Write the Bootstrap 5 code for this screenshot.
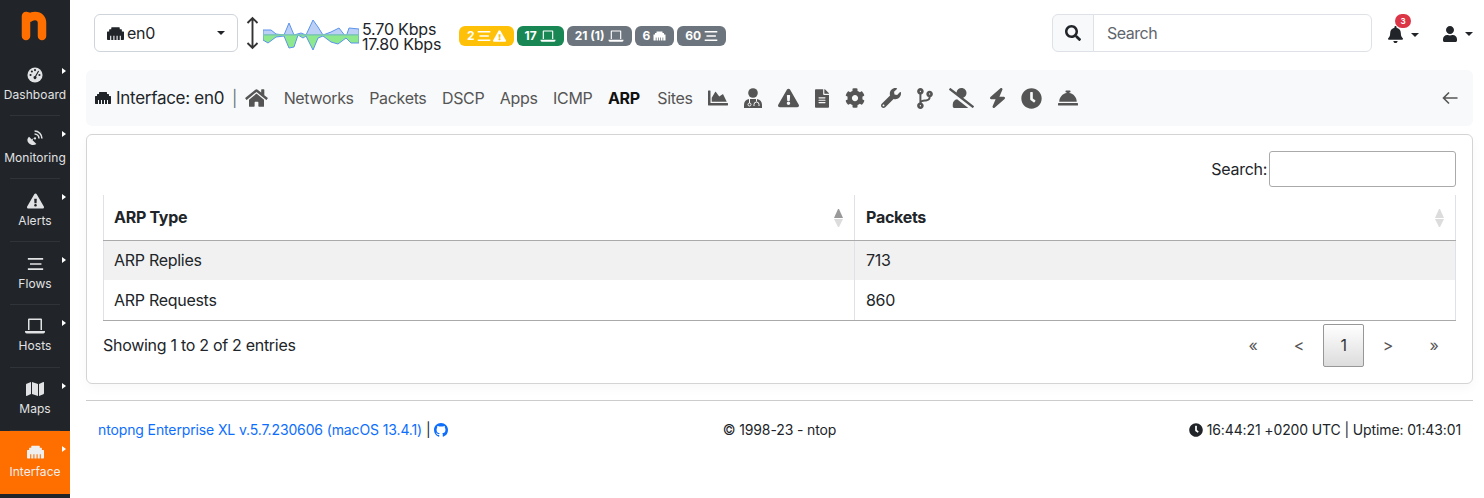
<!DOCTYPE html>
<html lang="en"><head><meta charset="utf-8"><title>ntopng</title>
<link rel="stylesheet" href="https://cdn.jsdelivr.net/npm/bootstrap@5.3.0/dist/css/bootstrap.min.css">
<style>
body{font-family:"Inter","Liberation Sans",sans-serif;color:#212529;font-size:16px;height:498px;overflow:hidden;letter-spacing:-.018em}
.ico{fill:currentColor;display:block}
.side{width:70px;height:498px;background:#212529;flex:none}
.logo-box{height:53px;padding:11px 0 0 21px}
.side-item{display:block;position:relative;height:63px;padding-top:13px;text-align:center;color:#e1e2e3;font-size:12px;line-height:18px;letter-spacing:.005em;text-decoration:none}
.side-item.nudge{padding-top:12px}
.side-item::after{content:"";position:absolute;left:10px;right:10px;bottom:0;border-bottom:1px solid #2f343a}
.side-item.on{background:#ff6f00;color:#eee}
.side-item.on::after{display:none}
.side-item .ico{margin:0 auto 2px;height:18px}
.side-caret{position:absolute;left:62px;top:15px;border-left:4.5px solid #fff;border-top:3.5px solid transparent;border-bottom:3.5px solid transparent}
.main{padding:0 11px 0 16px;min-width:0}
.top{height:66px;margin-bottom:4px;padding:14px 0 0 8px}
.if-select{width:144px;height:38px;border:1px solid #ced4da;border-radius:6px;padding:0 12px;background:#fff;font-size:16px}
.if-select .ico{width:17px;margin-right:3px}
.rate{font-size:16px;line-height:15px;margin-left:3px;width:97px;letter-spacing:-.012em}
.pills{gap:3px}
.pill{height:20px;padding:0 8px;border-radius:6px;font-size:12px;font-weight:700;line-height:20px;letter-spacing:0;color:#fff}
.pill .ico{margin-left:3px;height:12px}
.pill-first .ico{margin-left:2px}
.y-pill{background:#ffc107}.g-pill{background:#198754}.s-pill{background:#6c757d}
.find{width:320px;height:38px;margin-left:auto}
.find .input-group-text{background:#f8f9fa;padding:0 12px;width:42px}
.find .form-control{padding-left:13px;font-size:16px;letter-spacing:-.03em}
.find .form-control::placeholder{color:#5f666c}
.tool{position:relative;margin-left:16px;color:#212529}
.tool-user{margin-left:24px}
.bdg{position:absolute;left:7px;top:-8px;width:16px;height:14px;border-radius:7px;background:#dc3545;color:#fff;font-size:8px;font-weight:700;line-height:14px;text-align:center;letter-spacing:0}
.tiny-caret{border-top:4px solid #212529;border-left:4px solid transparent;border-right:4px solid transparent;margin-left:8px}
.if-select .tiny-caret{margin-left:auto}
.subnav{height:56px;background:#f8f9fa;border-radius:6px;padding:0 0 0 8px;color:#212529}
.subnav .ttl{font-size:17px;padding-top:1px}
.subnav .nl{color:#555;margin-left:15.5px;text-decoration:none;letter-spacing:-.021em}
.subnav .nl.act{color:#111;font-weight:700}
.subnav .nl.nl-sites{margin-left:17.5px}
.subnav .icn{color:#555;display:block;flex:none}
.subnav .pipe{margin:0 8px 0 8px}
.nav-icons{gap:16px;margin-left:15px;fill:#555}
.back-arrow{margin-right:15px}
.cardish{margin-top:8px;height:250px;border:1px solid #d4d4d4;border-radius:6px;padding:16px;box-shadow:0 4px 12px rgba(0,0,0,.03)}
.srch-row{height:44px}
.srch-row label{padding-top:6px}
.srch-row input{width:187px;height:36px;margin-left:2px;border-color:#aaa;border-radius:3px}
.dt{width:1353px;border-collapse:collapse;table-layout:fixed}
.dt th{height:45px;padding:0 10px;font-weight:700;border-bottom:1px solid #aaa;position:relative}
.dt td{height:40px;padding:0 10px}
.dt th:first-child,.dt td:first-child{border-left:1px solid #dee2e6;width:751px;border-right:1px solid #dee2e6}
.dt th:last-child,.dt td:last-child{border-right:1px solid #dee2e6;padding-left:11px}
.dt tbody tr:first-child{background:#f1f1f1}
.dt tbody tr:last-child td{border-bottom:1px solid #aaa}
.sorter{position:absolute;right:11px;top:14px;width:9px}
.sorter i{display:block;border-left:4.5px solid transparent;border-right:4.5px solid transparent}
.sorter i:first-child{border-bottom:9px solid #dcdcdc;margin-bottom:1px}
.sorter i:last-child{border-top:8px solid #dcdcdc}
.sorter.up i:first-child{border-bottom-color:#999}
.foot-row{height:47px;padding-top:2px}
.pgr{display:flex;align-items:center;margin:1px -1px 0 0;padding:0;list-style:none;color:#555}
.pgr span{display:block;width:46px;text-align:center;line-height:43px;height:43px;font-size:16px}
.pgr .cur{width:41px;margin:0 1px 0 1px;color:#333;border:1px solid #979797;border-radius:2px;background:linear-gradient(#fff,#dcdcdc);line-height:41px}
.sep{border-top:1px solid #ccc;margin-top:16px}
.foot{font-size:14px;padding:18px 12px 0;letter-spacing:-.009em}
.foot a{color:#0d6efd;text-decoration:none}
.foot svg{vertical-align:-2px}
.gh{fill:#0d6efd}.clk{fill:#212529}
</style></head>
<body>
<svg width="0" height="0" class="position-absolute"><defs>
<symbol id="eth" viewBox="0 0 512 512"><path d="M496 192h-48v-48c0-8.800-7.200-16-16-16h-48V80c0-8.800-7.200-16-16-16H144c-8.800 0-16 7.200-16 16v48H80c-8.800 0-16 7.200-16 16v48H16c-8.800 0-16 7.200-16 16v224c0 8.800 7.200 16 16 16h80V320h32v128h64V320h32v128h64V320h32v128h64V320h32v128h80c8.800 0 16-7.200 16-16V208c0-8.800-7.200-16-16-16z"/></symbol>
<symbol id="warn" viewBox="0 0 576 512"><path d="M569.517 440.013C587.975 472.007 564.806 512 527.94 512H48.054c-36.937 0-59.999-40.055-41.577-71.987L246.423 24.028c18.467-32.009 64.72-31.951 83.154 0l239.94 416.005zM288 354c-25.405 0-46 20.595-46 46s20.595 46 46 46 46-20.595 46-46-20.595-46-46-46zm-43.673-165.346l7.418 136c.347 6.364 5.609 11.346 11.982 11.346h48.546c6.373 0 11.635-4.982 11.982-11.346l7.418-136c.375-6.874-5.098-12.654-11.982-12.654h-63.383c-6.884 0-12.356 5.780-11.981 12.654z"/></symbol>
<symbol id="lines" viewBox="0 0 20 16"><path d="M1 1h18v2H1zM3.500 7h13.500v2H3.500zM1 13h18v2H1z"/></symbol>
<symbol id="lap" viewBox="0 0 20 16"><path d="M3 1.500a1 1 0 0 1 1-1h12a1 1 0 0 1 1 1V12h-1.500V2h-11v10H3zM0 13h20v.8A1.700 1.700 0 0 1 18.300 15.500H1.700A1.700 1.700 0 0 1 0 13.800z"/></symbol>
</defs></svg>
<div class="d-flex">
<nav class="side">
 <div class="logo-box"><svg width="26" height="30" viewBox="0 0 26 30"><path d="M5 25V5C5 5 8 5.500 9 6.500C10.500 5.500 12.500 5 14 5C18.500 5 21 8 21 12V25" fill="none" stroke="#ff6f00" stroke-width="8.500" stroke-linecap="round" stroke-linejoin="round"/></svg></div>
 <a class="side-item" href="#"><svg class="ico" width="16" height="18" viewBox="0 0 18 18"><circle cx="9" cy="9" r="8.500"/><g fill="#212529"><circle cx="4" cy="9" r="1.200"/><circle cx="5.500" cy="5" r="1.200"/><circle cx="9" cy="3.500" r="1.200"/><circle cx="14" cy="9" r="1.200"/><path d="M12.500 4.300l1.100.5-3.300 6a1.700 1.700 0 1 1-1.200-.6z"/></g></svg>Dashboard<span class="side-caret"></span></a>
 <a class="side-item" href="#"><svg class="ico" width="16" height="18" viewBox="0 0 18 18"><path d="M2.300 7.500l8.300 8.300c-2.600 1.800-6.200 1.500-8.500-.8S-.2 9.900 2.300 7.500z"/><circle cx="9" cy="9.500" r="1.300"/><path d="M7 9.500L5 12" stroke="currentColor" stroke-width="1"/><path d="M8.500 4.500a5 5 0 0 1 5 5M8.500 1.200a8.300 8.300 0 0 1 8.300 8.300" fill="none" stroke="currentColor" stroke-width="1.800"/></svg>Monitoring<span class="side-caret"></span></a>
 <a class="side-item" href="#"><svg class="ico" width="17" height="18"><use href="#warn"/></svg>Alerts<span class="side-caret"></span></a>
 <a class="side-item" href="#"><svg class="ico" width="17" height="18" viewBox="0 0 20 16"><use href="#lines"/></svg>Flows<span class="side-caret"></span></a>
 <a class="side-item nudge" href="#"><svg class="ico" width="20" height="18"><use href="#lap"/></svg>Hosts<span class="side-caret"></span></a>
 <a class="side-item nudge" href="#"><svg class="ico" width="18" height="18" viewBox="0 0 576 512"><path d="M0 117.660v346.320c0 11.320 11.430 19.060 21.940 14.860L160 416V32L20.120 87.950A32.006 32.006 0 0 0 0 117.660zM192 416l192 64V96L192 32v384zM554.060 33.160L416 96v384l139.880-55.950A31.996 31.996 0 0 0 576 394.340V48.020c0-11.320-11.430-19.060-21.940-14.860z"/></svg>Maps<span class="side-caret"></span></a>
 <a class="side-item nudge on" href="#"><svg class="ico" width="17" height="18"><use href="#eth"/></svg>Interface<span class="side-caret"></span></a>
</nav>
<main class="main flex-fill">
 <header class="top d-flex align-items-start">
  <div class="if-select d-flex align-items-center"><svg class="ico" width="17" height="17"><use href="#eth"/></svg><span>en0</span><span class="tiny-caret"></span></div>
  <svg class="ms-2" width="13" height="38" viewBox="0 0 13 38"><path d="M6.500 4v30M1.500 9l5-5 5 5M1.500 29l5 5 5-5" fill="none" stroke="#333" stroke-width="1.900"/></svg>
  <svg class="ms-1" width="96" height="38" viewBox="262 14 96 38">
   <path d="M262 30L270 30L275 34L283 35L288 23L293 35L300 33L305 35L312 20L317 27L322 35L330 32L338 28L345 37L348 28L358 29V35H262Z" fill="#bccff5" stroke="#5b93ee" stroke-width="1"/>
   <path d="M262 35V40L267 43L275 37L283 36L288 48L293 47L297 35L302 38L305 36L312 50L317 38L322 36L330 42L337 44L345 38L350 43L358 43V35Z" fill="#8ee88e" stroke="#5b93ee" stroke-width="1"/>
   <path d="M262 35H358" stroke="#8ee88e" stroke-width="1"/>
  </svg>
  <div class="rate d-flex flex-column pt-1 mt-1"><span>5.70 Kbps</span><span>17.80 Kbps</span></div>
  <div class="pills d-flex mt-2 pt-1">
   <span class="pill pill-first y-pill d-flex align-items-center">2<svg class="ico" width="14" height="12"><use href="#lines"/></svg><svg class="ico" width="13" height="12"><use href="#warn"/></svg></span>
   <span class="pill g-pill d-flex align-items-center">17<svg class="ico" width="16" height="12"><use href="#lap"/></svg></span>
   <span class="pill s-pill d-flex align-items-center">21 (1)<svg class="ico" width="16" height="12"><use href="#lap"/></svg></span>
   <span class="pill s-pill d-flex align-items-center">6<svg class="ico" width="13" height="12"><use href="#eth"/></svg></span>
   <span class="pill s-pill d-flex align-items-center">60<svg class="ico" width="14" height="12"><use href="#lines"/></svg></span>
  </div>
  <div class="input-group find">
   <span class="input-group-text justify-content-center"><svg class="ico" width="16" height="16" viewBox="0 0 512 512"><path d="M505 442.700L405.300 343c-4.500-4.500-10.600-7-17-7H372c27.600-35.300 44-79.700 44-128C416 93.100 322.900 0 208 0S0 93.100 0 208s93.100 208 208 208c48.300 0 92.700-16.400 128-44v16.300c0 6.400 2.500 12.500 7 17l99.700 99.700c9.400 9.400 24.600 9.400 33.900 0l28.300-28.300c9.400-9.400 9.400-24.600.1-34zM208 336c-70.700 0-128-57.200-128-128 0-70.700 57.200-128 128-128 70.700 0 128 57.200 128 128 0 70.700-57.200 128-128 128z"/></svg></span>
   <input class="form-control" placeholder="Search">
  </div>
  <div class="tool d-flex align-items-center mt-2 pt-1"><svg class="ico" width="15" height="17" viewBox="0 0 448 512"><path d="M224 512c35.320 0 63.970-28.650 63.970-64H160.030c0 35.350 28.650 64 63.970 64zm215.390-149.710c-19.320-20.760-55.470-51.990-55.470-154.290 0-77.700-54.480-139.900-127.940-155.160V32c0-17.670-14.320-32-31.980-32s-31.980 14.330-31.980 32v20.840C118.560 68.100 64.080 130.300 64.080 208c0 102.300-36.150 133.530-55.470 154.290-6 6.450-8.660 14.160-8.610 21.710.11 16.400 12.980 32 32.100 32h383.800c19.120 0 32-15.600 32.100-32 .05-7.550-2.610-15.270-8.610-21.710z"/></svg><span class="tiny-caret"></span><span class="bdg">3</span></div>
  <div class="tool tool-user d-flex align-items-center mt-2 pt-1"><svg class="ico" width="14" height="16" viewBox="0 0 448 512"><path d="M224 256c70.700 0 128-57.300 128-128S294.700 0 224 0 96 57.300 96 128s57.300 128 128 128zm89.600 32h-16.700c-22.200 10.200-46.900 16-72.900 16s-50.600-5.800-72.900-16h-16.700C60.200 288 0 348.200 0 422.400V464c0 26.500 21.500 48 48 48h352c26.500 0 48-21.500 48-48v-41.600c0-74.200-60.200-134.400-134.400-134.400z"/></svg><span class="tiny-caret"></span></div>
 </header>

 <section class="subnav d-flex align-items-center">
  <svg class="ico me-1" width="18" height="16"><use href="#eth"/></svg><span class="ttl">Interface: en0</span><span class="pipe text-secondary">|</span>
  <svg class="icn" width="23" height="20" viewBox="0 0 576 512"><path d="M280.370 148.260L96 300.110V464a16 16 0 0 0 16 16l112.060-.29a16 16 0 0 0 15.920-16V368a16 16 0 0 1 16-16h64a16 16 0 0 1 16 16v95.640a16 16 0 0 0 16 16.050L464 480a16 16 0 0 0 16-16V300L295.670 148.260a12.190 12.190 0 0 0-15.300 0zM571.600 251.470L488 182.560V44.050a12 12 0 0 0-12-12h-56a12 12 0 0 0-12 12v72.610L318.470 43a48 48 0 0 0-61 0L4.340 251.470a12 12 0 0 0-1.600 16.900l25.500 31A12 12 0 0 0 45.150 301l235.220-193.740a12.190 12.190 0 0 1 15.300 0L530.900 301a12 12 0 0 0 16.900-1.600l25.500-31a12 12 0 0 0-1.700-16.930z" fill="currentColor"/></svg>
  <a class="nl" href="#">Networks</a><a class="nl" href="#">Packets</a><a class="nl" href="#">DSCP</a><a class="nl" href="#">Apps</a><a class="nl" href="#">ICMP</a><a class="nl act" href="#">ARP</a><a class="nl nl-sites" href="#">Sites</a>
  <div class="nav-icons d-flex align-items-center">
  <svg class="icn" width="20" height="20" viewBox="0 0 512 512"><path d="M500 384c6.600 0 12 5.400 12 12v40c0 6.600-5.400 12-12 12H12c-6.600 0-12-5.400-12-12V76c0-6.600 5.400-12 12-12h40c6.600 0 12 5.400 12 12v308h436zM372.700 159.500L288 216l-85.300-113.700c-5.100-6.800-15.500-6.300-19.900.9L96 248v104h384l-89.900-187.800c-3.200-6.500-11.400-8.700-17.400-4.700z"/></svg>
  <svg class="icn" width="18" height="20" viewBox="0 0 18 20"><circle cx="9" cy="5" r="4.800"/><path d="M0 20v-3a6 6 0 0 1 5-5.900h8A6 6 0 0 1 18 17v3z"/><g fill="none" stroke="#f8f9fa" stroke-width="1"><circle cx="5.500" cy="16.500" r="1.500"/><path d="M5.500 11v4M12.500 11v2.500M10 18v-1.500a2.500 2.500 0 0 1 5 0V18"/></g></svg>
  <svg class="icn" width="21" height="20"><use href="#warn"/></svg>
  <svg class="icn" width="14" height="19" viewBox="0 0 384 512"><path d="M224 136V0H24C10.700 0 0 10.700 0 24v464c0 13.300 10.700 24 24 24h336c13.300 0 24-10.700 24-24V160H248c-13.200 0-24-10.800-24-24zm64 236c0 6.600-5.400 12-12 12H108c-6.600 0-12-5.400-12-12v-8c0-6.600 5.400-12 12-12h168c6.600 0 12 5.400 12 12v8zm0-64c0 6.600-5.400 12-12 12H108c-6.600 0-12-5.400-12-12v-8c0-6.600 5.400-12 12-12h168c6.600 0 12 5.400 12 12v8zm0-72v8c0 6.600-5.400 12-12 12H108c-6.600 0-12-5.400-12-12v-8c0-6.600 5.400-12 12-12h168c6.600 0 12 5.400 12 12zm96-114.100v6.100H256V0h6.100c6.400 0 12.500 2.500 17 7l97.900 98c4.500 4.500 7 10.600 7 16.900z"/></svg>
  <svg class="icn" width="20" height="20" viewBox="0 0 512 512"><path d="M487.400 315.700l-42.600-24.600c4.300-23.200 4.300-47 0-70.200l42.600-24.600c4.900-2.800 7.100-8.600 5.500-14-11.100-35.600-30-67.800-54.700-94.600-3.800-4.100-10-5.100-14.800-2.300L380.800 110c-17.900-15.400-38.500-27.300-60.800-35.100V25.800c0-5.600-3.900-10.500-9.400-11.700-36.700-8.200-74.300-7.800-109.200 0-5.500 1.200-9.400 6.100-9.400 11.700V75c-22.200 7.900-42.800 19.800-60.800 35.100L88.700 85.500c-4.900-2.800-11-1.900-14.800 2.300-24.700 26.700-43.600 58.900-54.700 94.600-1.700 5.400.6 11.200 5.500 14L67.300 221c-4.300 23.200-4.300 47 0 70.200l-42.600 24.600c-4.900 2.800-7.100 8.600-5.500 14 11.100 35.600 30 67.800 54.700 94.600 3.800 4.100 10 5.100 14.800 2.300l42.600-24.600c17.900 15.400 38.500 27.300 60.800 35.100v49.200c0 5.600 3.900 10.500 9.400 11.700 36.700 8.200 74.300 7.800 109.200 0 5.500-1.200 9.400-6.100 9.400-11.700v-49.200c22.200-7.900 42.800-19.800 60.800-35.100l42.600 24.600c4.900 2.800 11 1.900 14.800-2.300 24.700-26.700 43.600-58.900 54.700-94.600 1.500-5.500-.7-11.300-5.600-14.100zM256 336c-44.100 0-80-35.900-80-80s35.900-80 80-80 80 35.900 80 80-35.900 80-80 80z"/></svg>
  <svg class="icn" width="20" height="20" viewBox="0 0 512 512"><path d="M507.730 109.100c-2.240-9.030-13.540-12.090-20.120-5.510l-74.360 74.360-67.880-11.310-11.310-67.880 74.360-74.360c6.620-6.620 3.430-17.900-5.660-20.160-47.380-11.740-99.550.91-136.580 37.930-39.640 39.640-50.550 97.100-34.050 147.200L18.740 402.760c-24.990 24.990-24.990 65.510 0 90.500 24.990 24.990 65.510 24.990 90.500 0l213.210-213.210c50.120 16.710 107.470 5.680 147.370-34.220 37.070-37.070 49.700-89.320 37.910-136.730zM64 472c-13.250 0-24-10.750-24-24 0-13.260 10.750-24 24-24s24 10.740 24 24c0 13.250-10.750 24-24 24z"/></svg>
  <svg class="icn" width="16" height="21" viewBox="0 0 384 512"><path d="M384 144c0-44.200-35.800-80-80-80s-80 35.800-80 80c0 36.400 24.300 67.100 57.500 76.800-.6 16.100-4.200 28.500-11 36.900-15.400 19.200-49.300 22.400-85.200 25.700-28.200 2.600-57.400 5.400-81.300 16.900v-144c32.500-10.200 56-40.500 56-76.300 0-44.200-35.800-80-80-80S0 35.800 0 80c0 35.800 23.500 66.100 56 76.300v199.300C23.500 365.900 0 396.200 0 432c0 44.200 35.800 80 80 80s80-35.800 80-80c0-34-21.200-63.100-51.200-74.600 3.100-5.200 7.800-9.800 14.900-13.400 16.200-8.200 40.400-10.400 66.100-12.800 42.200-3.900 90-8.400 118.200-43.400 14-17.400 21.100-39.800 21.600-67.900 31.600-10.800 54.400-40.700 54.400-75.900zM80 64c8.800 0 16 7.200 16 16s-7.200 16-16 16-16-7.200-16-16 7.200-16 16-16zm0 384c-8.800 0-16-7.200-16-16s7.200-16 16-16 16 7.200 16 16-7.200 16-16 16zm224-320c8.800 0 16 7.200 16 16s-7.200 16-16 16-16-7.200-16-16 7.200-16 16-16z"/></svg>
  <svg class="icn" width="25" height="20" viewBox="0 0 640 512"><path d="M633.800 458.100L362.300 248.300C412.100 230.700 448 183.800 448 128 448 57.300 390.700 0 320 0c-67.100 0-121.500 51.800-126.900 117.400L45.500 3.400C38.500-2 28.500-.8 23 6.200L3.400 31.400c-5.400 7-4.200 17 2.800 22.400l588.400 454.700c7 5.400 17 4.200 22.500-2.800l19.600-25.300c5.400-6.800 4.100-16.900-2.900-22.300zM96 422.400V464c0 26.500 21.500 48 48 48h350.200L207.400 290.300C144.200 301.300 96 356 96 422.400z"/></svg>
  <svg class="icn" width="15" height="20" viewBox="32 0 384 512"><path d="M349.400 44.600c5.900-13.700 1.500-29.700-10.600-38.500s-28.600-8-39.900 1.800l-256 224c-10 8.800-13.600 22.900-8.900 35.300S50.700 288 64 288H175.500L98.600 467.400c-5.900 13.700-1.500 29.700 10.600 38.500s28.600 8 39.900-1.800l256-224c10-8.800 13.600-22.900 8.900-35.300s-16.600-20.700-30-20.700H272.500L349.400 44.600z"/></svg>
  <svg class="icn" width="21" height="21" viewBox="0 0 512 512"><path d="M256 8C119 8 8 119 8 256S119 504 256 504 504 393 504 256 393 8 256 8Zm92.490 313h0l-20 25a16 16 0 0 1-22.490 2.500h0l-67-49.720a40 40 0 0 1-15-31.230V112a16 16 0 0 1 16-16h32a16 16 0 0 1 16 16V256l58 42.500A16 16 0 0 1 348.490 321Z"/></svg>
  <svg class="icn" width="20" height="20" viewBox="0 0 512 512"><path d="M288 130.540V112h16c8.840 0 16-7.160 16-16V80c0-8.840-7.160-16-16-16h-96c-8.840 0-16 7.160-16 16v16c0 8.840 7.160 16 16 16h16v18.540C115.490 146.110 32 239.180 32 352h448c0-112.820-83.490-205.890-192-221.460zM496 384H16c-8.840 0-16 7.160-16 16v32c0 8.840 7.160 16 16 16h480c8.840 0 16-7.160 16-16v-32c0-8.840-7.160-16-16-16z"/></svg>
  </div>
  <svg class="icn back-arrow ms-auto" width="16" height="14" viewBox="0 0 16 14"><path d="M15.500 7H1.500M7 1.500L1.500 7 7 12.500" fill="none" stroke="#555" stroke-width="1.600"/></svg>
 </section>

 <section class="cardish bg-white">
  <div class="srch-row d-flex justify-content-end align-items-start"><label class="d-flex">Search:</label><input class="form-control" type="search"></div>
  <table class="dt">
   <thead><tr><th>ARP Type<span class="sorter up"><i></i><i></i></span></th><th>Packets<span class="sorter"><i></i><i></i></span></th></tr></thead>
   <tbody><tr><td>ARP Replies</td><td>713</td></tr><tr><td>ARP Requests</td><td>860</td></tr></tbody>
  </table>
  <div class="foot-row d-flex justify-content-between align-items-center"><span>Showing 1 to 2 of 2 entries</span>
   <div class="pgr"><span>«</span><span>&lt;</span><span class="cur">1</span><span>&gt;</span><span>»</span></div></div>
 </section>
 <div class="sep"></div>
 <footer class="foot row g-0">
  <div class="col-4"><a href="#">ntopng Enterprise XL v.5.7.230606 (macOS 13.4.1)</a> | <a href="#"><svg class="gh" width="14" height="14" viewBox="0 0 16 16"><path d="M8 0C3.580 0 0 3.580 0 8c0 3.540 2.290 6.530 5.470 7.590.4.070.55-.17.55-.38 0-.19-.01-.82-.01-1.490-2.010.37-2.530-.49-2.690-.94-.09-.23-.48-.94-.82-1.130-.28-.15-.68-.52-.01-.53.63-.01 1.080.58 1.230.82.72 1.210 1.870.87 2.330.66.070-.52.28-.87.51-1.070-1.780-.2-3.640-.89-3.640-3.950 0-.87.31-1.590.82-2.150-.08-.2-.36-1.020.08-2.120 0 0 .67-.21 2.200.82.64-.18 1.320-.27 2-.27.68 0 1.360.09 2 .27 1.530-1.040 2.200-.82 2.200-.82.44 1.100.16 1.920.08 2.120.51.56.82 1.270.82 2.150 0 3.070-1.870 3.750-3.650 3.950.29.25.54.73.54 1.480 0 1.070-.01 1.930-.01 2.200 0 .21.15.46.55.38A8.013 8.013 0 0016 8c0-4.420-3.580-8-8-8z"/></svg></a></div>
  <div class="col-4 text-center">© 1998-23 - ntop</div>
  <div class="col-4 text-end"><svg class="clk" width="14" height="14" viewBox="0 0 512 512"><path d="M256 8C119 8 8 119 8 256S119 504 256 504 504 393 504 256 393 8 256 8Zm92.490 313h0l-20 25a16 16 0 0 1-22.490 2.500h0l-67-49.720a40 40 0 0 1-15-31.230V112a16 16 0 0 1 16-16h32a16 16 0 0 1 16 16V256l58 42.500A16 16 0 0 1 348.490 321Z"/></svg> 16:44:21 +0200 UTC | Uptime: 01:43:01</div>
 </footer>
</main>
</div>
<script src="https://cdn.jsdelivr.net/npm/bootstrap@5.3.0/dist/js/bootstrap.bundle.min.js"></script>
</body></html>
